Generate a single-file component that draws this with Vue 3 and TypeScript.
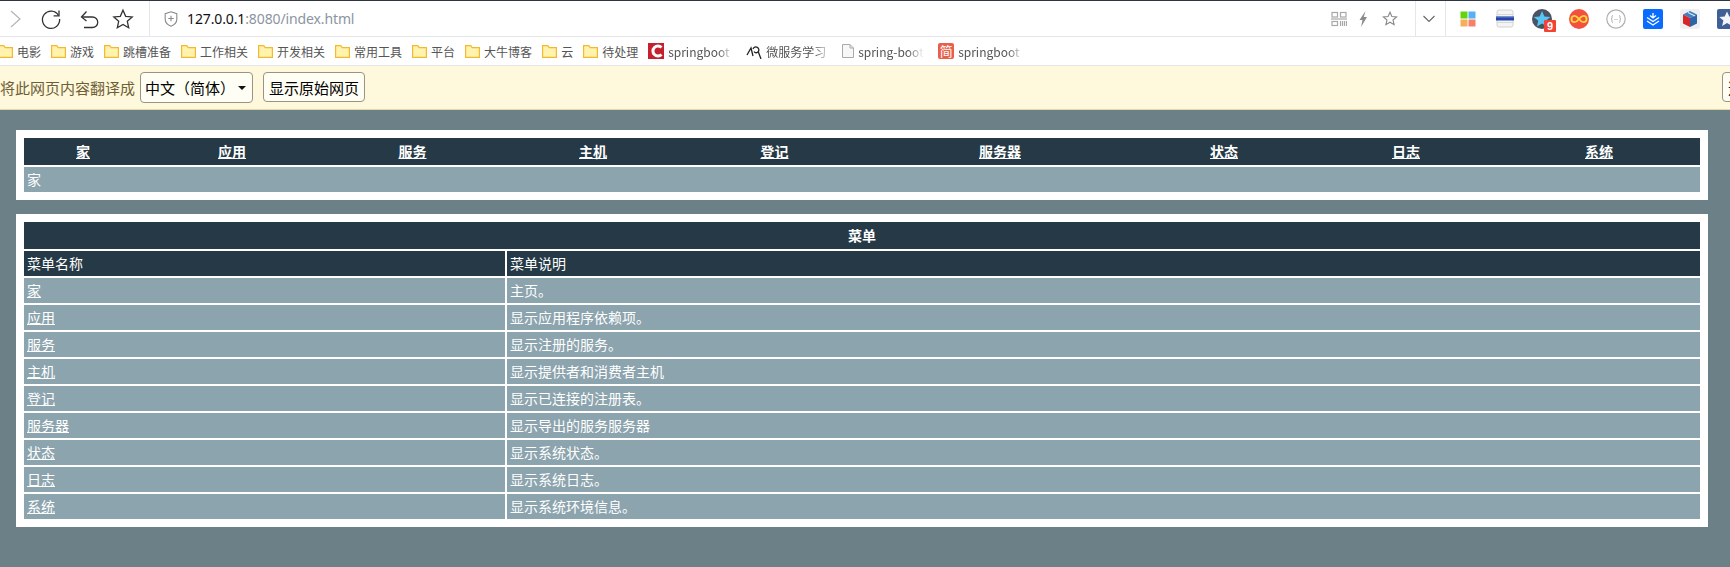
<template>
  <div class="screen">
    <div class="toolbar">
      <div class="toolbar-left">
        <svg class="nav-back" width="24" height="24" viewBox="0 0 24 24" fill="none" stroke="#b4b4b4" stroke-width="1.2"><path d="M8 4l9 8-9 8" /></svg>
        <svg class="nav-reload" width="24" height="24" viewBox="0 0 24 24" fill="none" stroke="#333" stroke-width="1.3"><path d="M19.5 8.5A8.6 8.6 0 1 0 20.6 12" /><path d="M20 3.5v5.4h-5.4" /></svg>
        <svg class="nav-undo" width="24" height="24" viewBox="0 0 24 24" fill="none" stroke="#333" stroke-width="1.3"><path d="M5 10h10.5a5 5 0 0 1 0 10.500H7" /><path d="M9.500 4.500L4.500 10l5 4" /></svg>
        <svg class="nav-star" width="24" height="24" viewBox="0 0 24 24" fill="none" stroke="#333" stroke-width="1.3"><path d="M12 3.200l2.700 6.100 6.500.6-4.900 4.400 1.400 6.500L12 17.400l-5.700 3.400 1.400-6.500-4.900-4.400 6.500-.6z" /></svg>
        <div class="divider nav-divider"></div>
        <svg class="shield" width="14" height="16" viewBox="0 0 14 16" fill="none" stroke="#8a8a8a" stroke-width="1.100"><path d="M7 .8l5.800 1.900v5.500c0 3.300-2.600 5.700-5.800 7-3.200-1.300-5.800-3.700-5.800-7V2.700z" /><path d="M7 4.800v5.400M4.300 7.500h5.400" /></svg>
        <span class="url"><span class="url-host">127.0.0.1</span>:8080/index.html</span>
      </div>
      <div class="toolbar-right">
        <svg width="16" height="16" viewBox="0 0 16 16" fill="none" stroke="#a8a8a8" stroke-width="1.200"><rect x="1" y="1.500" width="5.500" height="4.500" /><rect x="9.500" y="1.500" width="5.500" height="4.500" /><path d="M0 8h16" /><rect x="1" y="10.500" width="5.500" height="4" /><path d="M9.500 10v5M11.500 10v5M13.500 10v5M15.500 10v5" /></svg>
        <svg class="tool-bolt" width="16" height="16" viewBox="0 0 16 16"><path d="M10.500 0L4.500 9h3L6 16l6-10H8.800z" fill="#8a8a8a" /></svg>
        <svg class="tool-star" width="16" height="16" viewBox="0 0 16 16" fill="none" stroke="#888" stroke-width="1.100"><path d="M8 1.200l1.900 4.300 4.700.4-3.600 3.100 1.100 4.600L8 11.200l-4.100 2.400 1.100-4.600-3.600-3.100 4.700-.4z" /></svg>
        <div class="divider tool-divider-a"></div>
        <svg class="tool-chevron" width="12" height="8" viewBox="0 0 12 8" fill="none" stroke="#666" stroke-width="1.100"><path d="M.5 1l5.500 5.500L11.500 1" /></svg>
        <div class="divider tool-divider-b"></div>

        <div class="extensions">
          <svg width="20" height="20" viewBox="0 0 20 20"><rect x="2.500" y="2.500" width="7" height="7" fill="#62d30f" /><rect x="10.500" y="2.500" width="7" height="7" fill="#55b1f5" /><rect x="2.500" y="10.500" width="7" height="7" fill="#f9ad5b" /><rect x="10.500" y="10.500" width="7" height="7" fill="#f8806b" /></svg>
          <svg width="20" height="20" viewBox="0 0 20 20"><rect x="2" y="1" width="16" height="17" rx="2" fill="#f4f4f4" stroke="#d2d2d2" /><path d="M2 5.500h16M2 13.500h16" stroke="#d8d8d8" /><rect x="1" y="7.500" width="18" height="4" fill="#2446a8" /><rect x="1" y="7.500" width="18" height="1" fill="#6b86cf" /></svg>
          <div class="ext-star">
            <svg width="20" height="20" viewBox="0 0 20 20"><circle cx="10" cy="10" r="10" fill="#4a5362" /><path d="M10 2l2.400 5.400 5.900.5-4.500 3.900 1.400 5.800L10 14.500l-5.100 3.100 1.400-5.800-4.500-3.900 5.900-.5z" fill="#58c6f5" /></svg>
            <span class="badge">9</span>
          </div>
          <svg width="20" height="20" viewBox="0 0 20 20"><circle cx="10" cy="10" r="10" fill="#f4503f" /><path d="M10 10c-1.800-2.400-3-3.200-4.400-3.200a3.200 3.200 0 0 0 0 6.400c1.400 0 2.600-.8 4.400-3.200zm0 0c1.800-2.400 3-3.200 4.400-3.200a3.200 3.200 0 0 1 0 6.400c-1.400 0-2.600-.8-4.400-3.200z" fill="none" stroke="#ffd83a" stroke-width="1.800" /></svg>
          <svg width="20" height="20" viewBox="0 0 20 20" fill="none" stroke="#b0b0b0"><circle cx="10" cy="10" r="9.200" stroke-width="1.200" /><path d="M7 6.500c-1.200 0-1 1.200-1 2.200 0 .8-.6 1.300-.9 1.300.3 0 .9.500.9 1.300 0 1-.2 2.200 1 2.200M13 6.500c1.200 0 1 1.200 1 2.200 0 .8.6 1.300.9 1.300-.3 0-.9.500-.9 1.300 0 1 .2 2.200-1 2.200" stroke="#aaa" /><path d="M8.500 10.500h3" stroke="#aaa" stroke-dasharray="1 1" /></svg>
          <svg width="20" height="20" viewBox="0 0 20 20"><rect width="20" height="20" rx="2" fill="#0a6cff" /><path d="M10 4v4M7 6.500l3 2.500 3-2.500M4 8.500l6 4 6-4M4 12l6 4 6-4" fill="none" stroke="#fff" stroke-width="1.300" /></svg>
          <svg width="20" height="20" viewBox="0 0 20 20"><rect width="20" height="20" rx="3" fill="#efefef" /><path d="M10 2l7 3.500-7 3.500-7-3.500z" fill="#3f7fc4" /><path d="M3 5.500l7 3.500v9l-7-3.500z" fill="#d7252c" /><path d="M17 5.500L10 9v9l7-3.500z" fill="#2f63a8" /><path d="M8 3.500l7 3.500" stroke="#fff" /></svg>
          <svg width="20" height="20" viewBox="0 0 20 20"><rect width="20" height="20" rx="2" fill="#3f5f96" /><path d="M10 2.500l2.300 5 5.400.5-4.100 3.600 1.300 5.300-4.900-2.900-4.900 2.900 1.300-5.300L2.300 8l5.400-.5z" fill="#f2f4f8" /></svg>
        </div>
      </div>
    </div>

    <div class="bookmarks">
      <div v-for="item in bookmarks" :key="item.label" class="bookmark" :class="item.cls">
        <svg v-if="item.kind === 'folder'" width="15" height="13" viewBox="0 0 15 13"><path d="M.6 12.400V.6h5.200l1.400 2h7.200v9.800z" fill="#fff3ad" stroke="#f4b92f" stroke-width="1.200" /></svg>
        <svg v-else-if="item.kind === 'red'" width="16" height="16" viewBox="0 0 16 16"><rect width="16" height="16" fill="#c4202e" /><path d="M13.500 4.500A5 5 0 1 0 13.500 11.500" fill="none" stroke="#fff" stroke-width="3" /></svg>
        <svg v-else-if="item.kind === 'feather'" width="16" height="16" viewBox="0 0 16 16" fill="none" stroke="#222" stroke-width="1.300"><path d="M1 12l4-7 2 8M7 6a3 3 0 1 1 5 3c-1.500 1-3 1-4-.5M12 8l3 8" /></svg>
        <svg v-else-if="item.kind === 'file'" width="12" height="14" viewBox="0 0 12 14"><path d="M.5.500h7.500l3.500 3.500v9.500H.5z" fill="#f7f7f7" stroke="#aaa" /><path d="M8 .5V4h3.500" fill="none" stroke="#aaa" /></svg>
        <span v-else class="icon-jian">简</span>
        <span class="bookmark-label" :class="{ faded: item.kind !== 'folder' }">{{ item.label }}</span>
      </div>
    </div>

    <div class="translate-bar">
      <span class="translate-label">将此网页内容翻译成</span>
      <div class="translate-select">
        <span>中文（简体）</span>
        <span class="caret"></span>
      </div>
      <button class="translate-btn">显示原始网页</button>
      <button class="translate-btn options">选项</button>
    </div>

    <div class="page">
      <div class="panel panel-menu">
        <div class="menu-row">
          <a v-for="item in menu" :key="item.name" class="menu-link" href="#">{{ item.name }}</a>
        </div>
        <div class="crumb">家</div>
      </div>

      <div class="panel panel-list">
        <table class="list">
          <colgroup>
            <col class="col-name" />
            <col />
          </colgroup>
          <thead>
            <tr><th colspan="2" class="list-title">菜单</th></tr>
            <tr>
              <td class="head-cell">菜单名称</td>
              <td class="head-cell">菜单说明</td>
            </tr>
          </thead>
          <tbody>
            <tr v-for="item in menu" :key="item.name">
              <td><a href="#">{{ item.name }}</a></td>
              <td>{{ item.desc }}</td>
            </tr>
          </tbody>
        </table>
      </div>
    </div>
  </div>
</template>

<script setup lang="ts">
interface Bookmark {
  label: string
  kind: 'folder' | 'red' | 'feather' | 'file' | 'jian'
  cls?: string
}

const bookmarks: Bookmark[] = [
  { label: '电影', kind: 'folder' },
  { label: '游戏', kind: 'folder' },
  { label: '跳槽准备', kind: 'folder' },
  { label: '工作相关', kind: 'folder' },
  { label: '开发相关', kind: 'folder' },
  { label: '常用工具', kind: 'folder' },
  { label: '平台', kind: 'folder' },
  { label: '大牛博客', kind: 'folder' },
  { label: '云', kind: 'folder' },
  { label: '待处理', kind: 'folder' },
  { label: 'springboot', kind: 'red', cls: 'after-red' },
  { label: '微服务学习', kind: 'feather' },
  { label: 'spring-boot', kind: 'file', cls: 'after-file' },
  { label: 'springboot ', kind: 'jian' }
]

const menu = [
  { name: '家', desc: '主页。' },
  { name: '应用', desc: '显示应用程序依赖项。' },
  { name: '服务', desc: '显示注册的服务。' },
  { name: '主机', desc: '显示提供者和消费者主机' },
  { name: '登记', desc: '显示已连接的注册表。' },
  { name: '服务器', desc: '显示导出的服务服务器' },
  { name: '状态', desc: '显示系统状态。' },
  { name: '日志', desc: '显示系统日志。' },
  { name: '系统', desc: '显示系统环境信息。' }
]
</script>

<style>
html,
body {
  margin: 0;
  background: #6c8087;
}
</style>

<style scoped>
.screen {
  width: 1730px;
  height: 567px;
  overflow: hidden;
  display: flex;
  flex-direction: column;
  font-family: "Noto Sans CJK SC", "Noto Sans", sans-serif;
  background: #6c8087;
}

/* browser chrome */
.toolbar {
  height: 36px;
  flex: none;
  box-sizing: border-box;
  display: flex;
  background: #fff;
  border-top: 1px solid #2f3540;
}

.toolbar-left {
  flex: 1;
  display: flex;
  align-items: center;
  padding-left: 3px;
}

.toolbar-right {
  flex: 0 0 399px;
  display: flex;
  align-items: center;
  overflow: hidden;
}

.toolbar-right svg {
  flex: none;
}

.divider {
  align-self: stretch;
  width: 1px;
  flex: none;
  background: #e4e6e9;
}

.nav-reload { margin-left: 12px; }
.nav-undo { margin-left: 14px; }
.nav-star { margin-left: 10px; }
.nav-divider { margin-left: 14px; }
.shield { margin-left: 14px; }

.url {
  margin-left: 9px;
  font-family: "Noto Sans", sans-serif;
  font-size: 14px;
  letter-spacing: -0.12px;
  color: #8b95a0;
}

.url-host {
  color: #111;
}

.tool-bolt { margin-left: 8px; }
.tool-star { margin-left: 11px; }
.tool-divider-a { margin-left: 17px; }
.tool-chevron { margin-left: 7px; }
.tool-divider-b { margin-left: 10px; }

.extensions {
  margin-left: 12px;
  flex: none;
  display: flex;
  align-items: center;
  gap: 17px;
}

.extensions svg {
  display: block;
}

.ext-star {
  position: relative;
  width: 20px;
  height: 20px;
  flex: none;
}

.badge {
  position: absolute;
  left: 12px;
  top: 11px;
  width: 12px;
  height: 12px;
  border-radius: 1px;
  background: #f44336;
  color: #fff;
  font-family: "Liberation Sans", sans-serif;
  font-size: 11px;
  font-weight: 700;
  line-height: 12px;
  text-align: center;
}

.bookmarks {
  height: 30px;
  flex: none;
  box-sizing: border-box;
  display: flex;
  align-items: center;
  margin-left: -2px;
  background: #fff;
  border-top: 1px solid #e4e6e9;
  border-bottom: 1px solid #e4e6e9;
  gap: 10px;
  font-size: 12px;
  color: #555;
}

.bookmark {
  display: flex;
  align-items: center;
  gap: 4px;
  flex: none;
}

.bookmark-label {
  white-space: nowrap;
}

.bookmark-label.faded {
  display: inline-block;
  width: 66px;
  overflow: hidden;
  -webkit-mask-image: linear-gradient(to right, #000 75%, transparent);
  mask-image: linear-gradient(to right, #000 75%, transparent);
}

.icon-jian {
  width: 16px;
  height: 16px;
  border-radius: 2px;
  background: #e8604c;
  color: #fff;
  font-size: 13px;
  line-height: 16px;
  text-align: center;
}

.after-red {
  margin-right: 2px;
}

.after-file {
  margin-right: 4px;
}

.translate-bar {
  height: 44px;
  flex: none;
  box-sizing: border-box;
  display: flex;
  align-items: center;
  background: #fef8dc;
  border-bottom: 1px solid #e6d9a6;
  padding-bottom: 1px;
}

.translate-label {
  font-size: 15px;
  color: #6e5f36;
  white-space: nowrap;
}

.translate-select {
  margin-left: 5px;
  width: 113px;
  height: 31px;
  flex: none;
  box-sizing: border-box;
  display: flex;
  align-items: center;
  justify-content: space-between;
  padding: 0 6px 0 4px;
  background: #fffef4;
  border: 1px solid #9a9480;
  border-radius: 4px;
  font-size: 15px;
  color: #000;
  white-space: nowrap;
}

.caret {
  width: 0;
  height: 0;
  flex: none;
  border-left: 4px solid transparent;
  border-right: 4px solid transparent;
  border-top: 4px solid #111;
  margin-top: 2px;
}

.translate-btn {
  margin-left: 10px;
  width: 102px;
  height: 30px;
  flex: none;
  padding: 0;
  background: #fffef4;
  border: 1px solid #9a9480;
  border-radius: 4px;
  font-family: inherit;
  font-size: 15px;
  color: #000;
  white-space: nowrap;
}

.translate-btn.options {
  margin-left: 1357px;
  width: 60px;
  padding-left: 5px;
  text-align: left;
}

/* page content */
.page {
  flex: 1;
  padding: 20px 22px 0 16px;
}

.panel {
  background: #fff;
}

.panel-menu {
  height: 70px;
  box-sizing: border-box;
  padding: 8px;
  display: flex;
  flex-direction: column;
  gap: 2px;
}

.panel-list {
  margin-top: 14px;
  padding: 6px;
}

.menu-row {
  height: 27px;
  display: grid;
  grid-template-columns: 118px 180px 181px 180px 183px 268px 180px 184px 202px;
  background: #253a46;
}

.menu-link {
  font-size: 14px;
  font-weight: 700;
  line-height: 27px;
  text-align: center;
  color: #fff;
  text-decoration: underline;
}

.crumb {
  height: 25px;
  padding-left: 3px;
  font-size: 14px;
  line-height: 25px;
  color: #fff;
  background: #8ca4ae;
}

.list {
  width: 100%;
  table-layout: fixed;
  border-collapse: separate;
  border-spacing: 2px;
  font-size: 14px;
  color: #fff;
}

.col-name {
  width: 481px;
}

.list th,
.list td {
  padding: 0 3px;
  height: 25px;
  line-height: 25px;
  text-align: left;
  background: #8ca4ae;
  box-sizing: border-box;
  white-space: nowrap;
}

.list .list-title {
  height: 27px;
  line-height: 27px;
  text-align: center;
  background: #253a46;
}

.list .head-cell {
  background: #253a46;
}

.list a {
  color: #fff;
  text-decoration: underline;
}
</style>
